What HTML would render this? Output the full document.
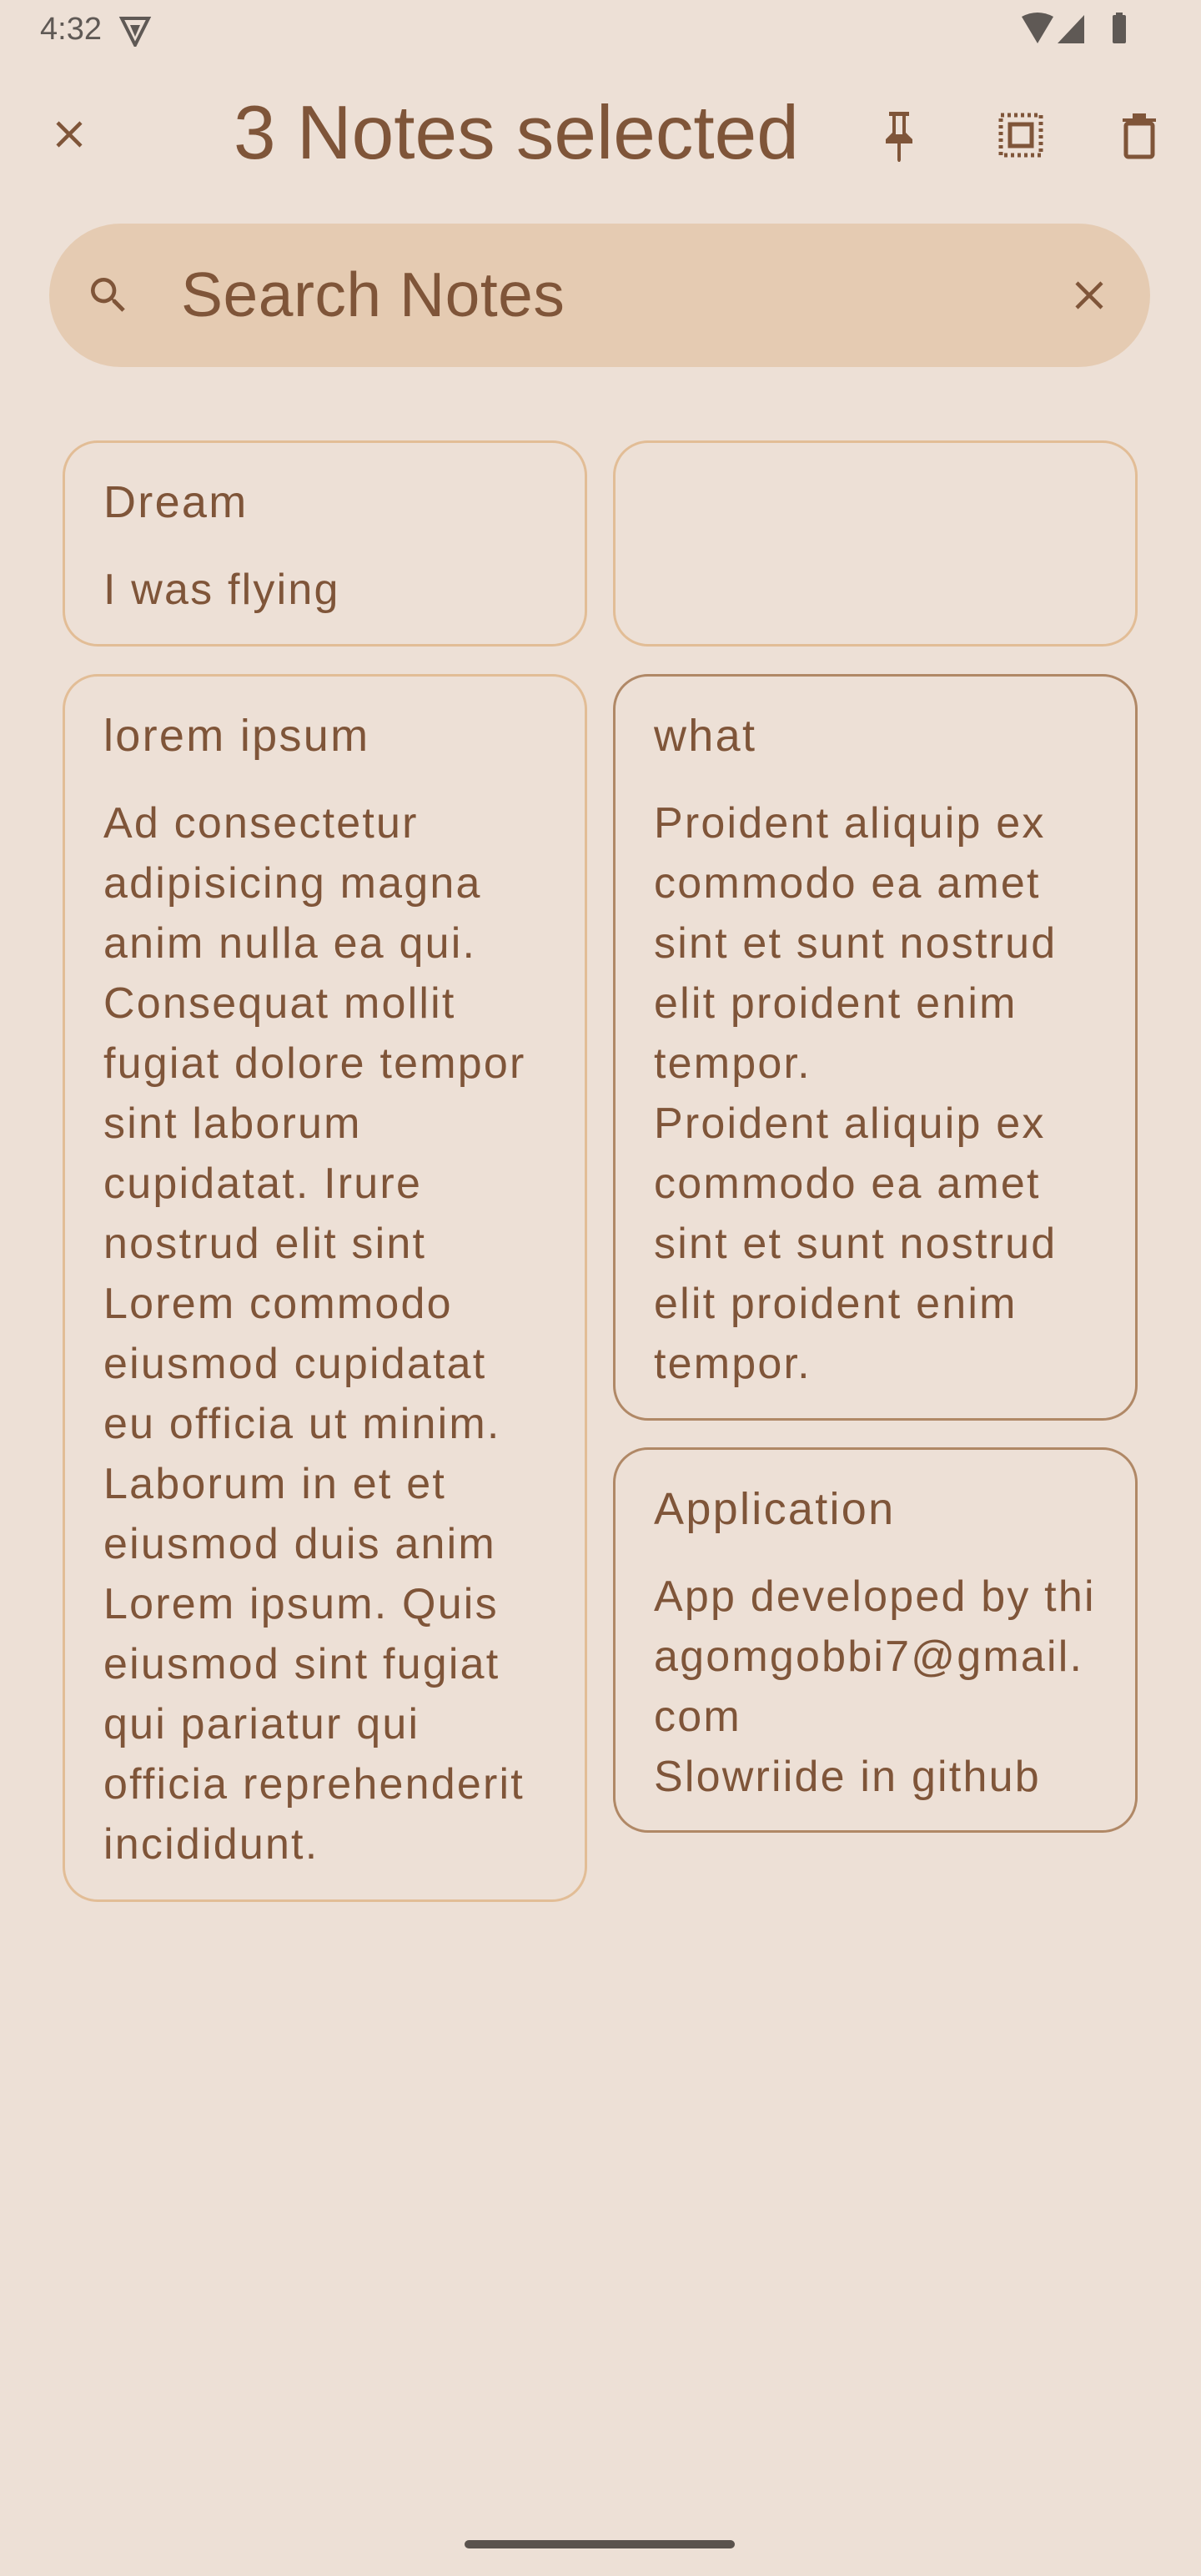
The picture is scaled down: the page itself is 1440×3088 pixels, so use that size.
<!DOCTYPE html>
<html><head><meta charset="utf-8"><style>
*{margin:0;padding:0;box-sizing:border-box}
body{width:1440px;height:3088px;background:#ede0d6;font-family:"Liberation Sans",sans-serif;color:#7f5539;position:relative;overflow:hidden}
.abs{position:absolute}
.card{position:absolute;border:3px solid #e2bd96;border-radius:42px}
.card.sel{border-color:#b08866}
.t{position:absolute;left:46px;font-size:54px;letter-spacing:2.3px;white-space:nowrap}
.b{position:absolute;left:46px;font-size:52px;line-height:72px;white-space:nowrap;letter-spacing:2.2px}
</style></head><body>
<div class="abs" style="left:48px;top:14px;font-size:38px;color:#5f5955">4:32</div>
<svg class="abs" style="left:142px;top:18px" width="40" height="38" viewBox="0 0 20 19"><path d="M2 2h16l-8 16z" fill="none" stroke="#5f5955" stroke-width="2"/><path d="M7 6h6l-3 7z" fill="#5f5955"/></svg>
<svg class="abs" style="left:1222px;top:14px" width="130" height="42" viewBox="0 0 130 42"><path d="M3 6 Q22 -4 41 6 L22 38z" fill="#5f5955"/><path d="M78 4 V38 H46z" fill="#5f5955"/><rect x="112" y="4" width="16" height="34" rx="2" fill="#5f5955"/><rect x="116" y="1" width="8" height="4" fill="#5f5955"/></svg>

<svg class="abs" style="left:63px;top:141px" width="40" height="40" viewBox="0 0 40 40"><path d="M6 6L34 34M34 6L6 34" stroke="#7f5539" stroke-width="4.5"/></svg>
<div class="abs" style="left:280px;top:110px;font-size:91px;line-height:100px;white-space:nowrap">3 Notes selected</div>
<svg class="abs" style="left:1056px;top:130px" width="44" height="64" viewBox="0 0 44 64"><path d="M10 4h24v5h-4v20l8 8v5H24v20l-2 4-2-4V42H6v-5l8-8V9h-4z" fill="#7f5539"/><rect x="18" y="9" width="8" height="22" fill="#ede0d6"/></svg>
<svg class="abs" style="left:1196px;top:134px" width="56" height="56" viewBox="0 0 56 56"><path d="M4 4h48v48H4z" fill="none" stroke="#7f5539" stroke-width="5" stroke-dasharray="4 4"/><rect x="15" y="15" width="26" height="26" fill="none" stroke="#7f5539" stroke-width="5"/></svg>
<svg class="abs" style="left:1342px;top:132px" width="48" height="60" viewBox="0 0 48 60"><rect x="4" y="10" width="40" height="4" fill="#7f5539"/><rect x="16" y="4" width="16" height="6" fill="#7f5539"/><rect x="8" y="16" width="32" height="40" rx="3" fill="none" stroke="#7f5539" stroke-width="5"/></svg>

<div class="abs" style="left:59px;top:268px;width:1320px;height:172px;border-radius:86px;background:#e5cbb2"></div>
<svg class="abs" style="left:102px;top:326px" width="56" height="56" viewBox="0 0 24 24"><path d="M15.5 14h-.79l-.28-.27A6.47 6.47 0 0 0 16 9.5 6.5 6.5 0 1 0 9.5 16c1.61 0 3.09-.59 4.23-1.57l.27.28v.79l5 4.99L20.49 19l-4.99-5zm-6 0C7.01 14 5 11.99 5 9.5S7.01 5 9.5 5 14 7.01 14 9.5 11.99 14 9.5 14z" fill="#7f5539"/></svg>
<div class="abs" style="left:217px;top:310px;font-size:75px;line-height:86px;white-space:nowrap;letter-spacing:0.5px">Search Notes</div>
<svg class="abs" style="left:1286px;top:334px" width="40" height="40" viewBox="0 0 40 40"><path d="M5 5L35 35M35 5L5 35" stroke="#7f5539" stroke-width="4.5"/></svg>

<div class="card" style="left:75px;top:528px;width:629px;height:247px">
<div class="t" style="top:40px">Dream</div>
<div class="b" style="top:140px">I was flying</div></div>
<div class="card" style="left:735px;top:528px;width:629px;height:247px"></div>

<div class="card" style="left:75px;top:808px;width:629px;height:1472px">
<div class="t" style="top:40px">lorem ipsum</div>
<div class="b" style="top:140px">Ad consectetur<br>adipisicing magna<br>anim nulla ea qui.<br>Consequat mollit<br>fugiat dolore tempor<br>sint laborum<br>cupidatat. Irure<br>nostrud elit sint<br>Lorem commodo<br>eiusmod cupidatat<br>eu officia ut minim.<br>Laborum in et et<br>eiusmod duis anim<br>Lorem ipsum. Quis<br>eiusmod sint fugiat<br>qui pariatur qui<br>officia reprehenderit<br>incididunt.</div></div>

<div class="card sel" style="left:735px;top:808px;width:629px;height:895px">
<div class="t" style="top:40px">what</div>
<div class="b" style="top:140px">Proident aliquip ex<br>commodo ea amet<br>sint et sunt nostrud<br>elit proident enim<br>tempor.<br>Proident aliquip ex<br>commodo ea amet<br>sint et sunt nostrud<br>elit proident enim<br>tempor.</div></div>

<div class="card sel" style="left:735px;top:1735px;width:629px;height:462px">
<div class="t" style="top:40px">Application</div>
<div class="b" style="top:140px">App developed by thi<br>agomgobbi7@gmail.<br>com<br>Slowriide in github</div></div>

<div class="abs" style="left:557px;top:3045px;width:324px;height:10px;border-radius:5px;background:#5a524d"></div>
</body></html>
